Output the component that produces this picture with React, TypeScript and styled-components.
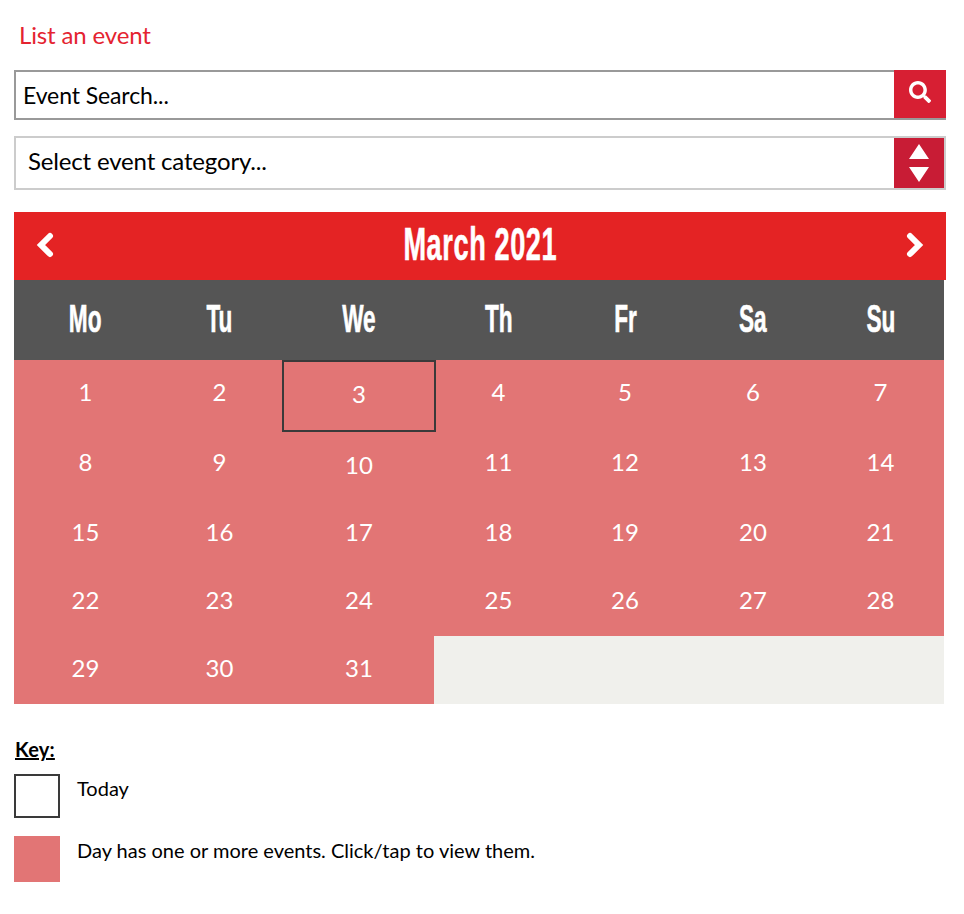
import React from "react";
import styled, { createGlobalStyle } from "styled-components";
import { FaSearch } from "react-icons/fa";

const GlobalStyle = createGlobalStyle`
    body {
        margin: 0;
        background: #fff;
        font-family: Lato, "Open Sans", sans-serif;
        color: #000;
    }
`;

const Page = styled.div`
    width: 932px;
    padding: 0 18px 0 14px;
    height: 914px;
    overflow: hidden;
`;

const ListLink = styled.a`
    display: block;
    height: 70px;
    padding: 20px 0 0 5px;
    box-sizing: border-box;
    font-size: 24px;
    line-height: 30px;
    letter-spacing: -0.15px;
    color: #e42330;
`;

const SearchBar = styled.div`
    display: flex;
    height: 50px;
    box-sizing: border-box;
    border: 2px solid #999;
    border-right: 0;
    background: #fff;
`;

const SearchLabel = styled.div`
    flex: 1;
    padding-left: 7px;
    font-size: 23px;
    letter-spacing: -0.1px;
    line-height: 46px;
`;

const SearchButton = styled.div`
    width: 52px;
    margin: -2px 0;
    height: 48px;
    background: #d71f33;
    color: #fff;
    display: flex;
    align-items: center;
    justify-content: center;
    padding-bottom: 4px;
    box-sizing: border-box;
`;

const SelectBar = styled.div`
    display: flex;
    height: 54px;
    margin-top: 16px;
    box-sizing: border-box;
    border: 2px solid #ccc;
`;

const SelectLabel = styled.div`
    flex: 1;
    padding-left: 12px;
    font-size: 24px;
    letter-spacing: -0.17px;
    line-height: 46px;
`;

const SelectButton = styled.div`
    width: 50px;
    background: #c81c35;
    display: flex;
    align-items: center;
    justify-content: center;
`;

const MonthBar = styled.div`
    display: flex;
    align-items: center;
    justify-content: space-between;
    height: 68px;
    box-sizing: border-box;
    margin-top: 22px;
    padding: 0 22px 2px;
    background: #e42324;
    color: #fff;
`;

const Condensed = styled.span`
    font-family: "Liberation Sans Narrow", "Liberation Sans", sans-serif;
    font-weight: 700;
    color: #fff;
    display: inline-block;
    -webkit-text-stroke: 0.6px #fff;
`;

const MonthTitle = styled(Condensed)`
    font-size: 46px;
    line-height: 64px;
    letter-spacing: 1px;
    transform: scaleX(0.59);
    white-space: nowrap;
    margin-top: -2px;
`;

const Calendar = styled.div`
    width: 930px;
    display: grid;
    grid-template-columns: 143px 125px 154px 125px 128px 128px 127px;
`;

const WeekdayCell = styled.div`
    height: 80px;
    background: #555;
    display: flex;
    align-items: center;
    justify-content: center;
`;

const WeekdayText = styled(Condensed)`
    font-size: 39px;
    transform: scaleX(0.58);
    margin-top: -2px;
`;

const DayCell = styled.div<{ $tall: boolean; $nudge: number; $today: boolean }>`
    position: relative;
    height: ${(p) => (p.$tall ? 70 : 68)}px;
    box-sizing: border-box;
    background: #e27575;
    color: #fff;
    font-size: 24px;
    line-height: 30px;
    text-align: center;
    padding-top: ${(p) => p.$nudge}px;
    ${(p) =>
        p.$today &&
        `
        border: 2px solid #3a3a3a;
        height: 72px;
        margin-bottom: -2px;
        z-index: 1;
    `}
`;

const EmptyCell = styled.div<{ $first: boolean }>`
    position: relative;
    height: 68px;
    background: #f0f0ec;
    margin-left: ${(p) => (p.$first ? -2 : 0)}px;
`;

const KeySection = styled.div`
    margin-top: 31px;
`;

const KeyHeading = styled.div`
    padding-left: 1px;
    font-size: 20px;
    font-weight: 700;
    letter-spacing: 0.2px;
    line-height: 28px;
    text-decoration: underline;
`;

const KeyRow = styled.div`
    display: flex;
    gap: 17px;
    margin-top: 11px;
    margin-bottom: 18px;
    font-size: 20px;
    line-height: 28px;
`;

const Swatch = styled.div<{ $filled: boolean }>`
    width: 46px;
    height: ${(p) => (p.$filled ? 46 : 44)}px;
    box-sizing: border-box;
    background: ${(p) => (p.$filled ? "#e27575" : "#fff")};
    border: ${(p) => (p.$filled ? "0" : "2px solid #3a3a3a")};
`;

const days = ["Mo", "Tu", "We", "Th", "Fr", "Sa", "Su"];
const tallRows = [0, 2];

function dayNudge(day: number, row: number) {
    if (day === 3) return 17;
    if (day === 10) return 20;
    return [17, 17, 19, 17, 17][row];
}

const Chevron = ({ flip }: { flip?: boolean }) => (
    <svg width="18" height="26" viewBox="0 0 18 26">
        <path
            d={flip ? "M4 4 L13 13 L4 22" : "M14 4 L5 13 L14 22"}
            fill="none"
            stroke="#fff"
            strokeWidth="6"
            strokeLinecap="round"
            strokeLinejoin="miter"
        />
    </svg>
);

export default function App() {
    const numbers = Array.from({ length: 31 }, (_, i) => i + 1);
    return (
        <Page>
            <GlobalStyle />
            <ListLink>List an event</ListLink>
            <SearchBar>
                <SearchLabel>Event Search...</SearchLabel>
                <SearchButton>
                    <FaSearch size={22} />
                </SearchButton>
            </SearchBar>
            <SelectBar>
                <SelectLabel>Select event category...</SelectLabel>
                <SelectButton>
                    <svg width="30" height="40" viewBox="0 0 30 40">
                        <path d="M15 1 L25 16 L5 16 Z M5 24 L25 24 L15 39 Z" fill="#fff" />
                    </svg>
                </SelectButton>
            </SelectBar>
            <MonthBar>
                <Chevron />
                <MonthTitle>March 2021</MonthTitle>
                <Chevron flip />
            </MonthBar>
            <Calendar>
                {days.map((d) => (
                    <WeekdayCell key={d}>
                        <WeekdayText>{d}</WeekdayText>
                    </WeekdayCell>
                ))}
                {numbers.map((n) => {
                    const row = Math.floor((n - 1) / 7);
                    return (
                        <DayCell
                            key={n}
                            $tall={tallRows.includes(row)}
                            $nudge={dayNudge(n, row)}
                            $today={n === 3}
                        >
                            {n}
                        </DayCell>
                    );
                })}
                {[0, 1, 2, 3].map((i) => (
                    <EmptyCell key={i} $first={i === 0} />
                ))}
            </Calendar>
            <KeySection>
                <KeyHeading>Key:</KeyHeading>
                <KeyRow>
                    <Swatch $filled={false} />
                    <span>Today</span>
                </KeyRow>
                <KeyRow>
                    <Swatch $filled />
                    <span>Day has one or more events. Click/tap to view them.</span>
                </KeyRow>
            </KeySection>
        </Page>
    );
}
